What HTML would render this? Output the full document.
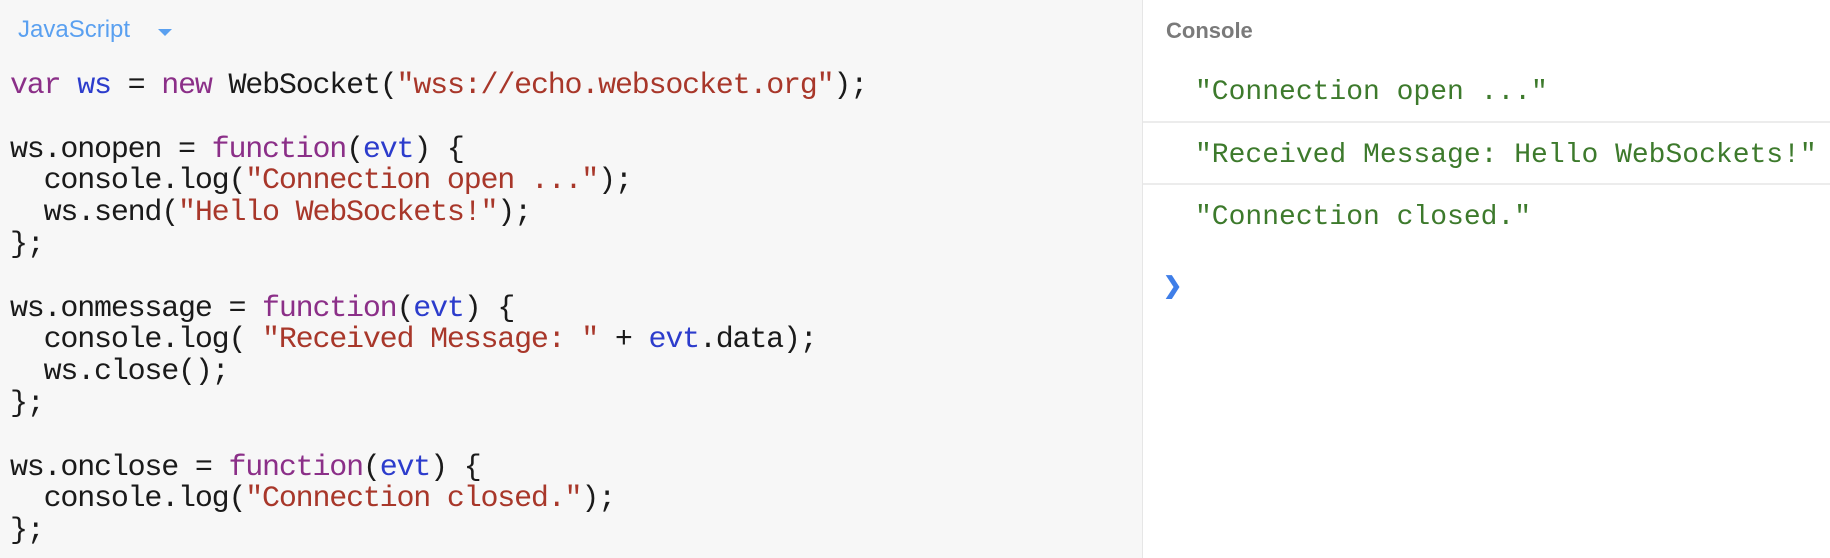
<!DOCTYPE html>
<html><head><meta charset="utf-8"><style>
html,body{margin:0;padding:0;}
body{width:1830px;height:558px;position:relative;overflow:hidden;background:#f7f7f7;font-family:"Liberation Sans",sans-serif;}
#left{position:absolute;left:0;top:0;width:1142px;height:558px;background:#f7f7f7;}
#right{position:absolute;left:1142px;top:0;width:688px;height:558px;background:#fff;border-left:1px solid #e6e6e6;}
.lang{position:absolute;left:18px;top:16px;font-size:24px;color:#5aa0f0;}
.tri{position:absolute;left:158px;top:29px;width:0;height:0;border-left:7px solid transparent;border-right:7px solid transparent;border-top:7px solid #5aa0f0;}
pre{position:absolute;left:10px;top:71px;margin:0;font-family:"Liberation Mono",monospace;font-size:30px;letter-spacing:-1.2px;line-height:31.8px;color:#1a1a1a;}
.k{color:#8b2f88}.v{color:#2c3ccc}.s{color:#a8372a}
.hdr{position:absolute;left:23px;top:18px;font-size:22px;font-weight:bold;color:#7a7a7a;}
.row{position:absolute;left:0;width:688px;height:62px;font-family:"Liberation Mono",monospace;font-size:28px;color:#3d7a2c;}
.row span{position:absolute;left:52px;top:17px;}
.sep{position:absolute;left:0;width:688px;height:2px;background:#ececec;}
.chev{position:absolute;left:20px;top:272px;font-size:23px;font-weight:bold;color:#3f7ee8;}
</style></head><body>
<div id="left">
<div class="lang">JavaScript</div><div class="tri"></div>
<pre><span class="k">var</span> <span class="v">ws</span> = <span class="k">new</span> WebSocket(<span class="s">"wss://echo.websocket.org"</span>);

ws.onopen = <span class="k">function</span>(<span class="v">evt</span>) {
  console.log(<span class="s">"Connection open ..."</span>);
  ws.send(<span class="s">"Hello WebSockets!"</span>);
};

ws.onmessage = <span class="k">function</span>(<span class="v">evt</span>) {
  console.log( <span class="s">"Received Message: "</span> + <span class="v">evt</span>.data);
  ws.close();
};

ws.onclose = <span class="k">function</span>(<span class="v">evt</span>) {
  console.log(<span class="s">"Connection closed."</span>);
};</pre>
</div>
<div id="right">
<div class="hdr">Console</div>
<div class="row" style="top:60px"><span>"Connection open ..."</span></div>
<div class="sep" style="top:121px"></div>
<div class="row" style="top:123px"><span>"Received Message: Hello WebSockets!"</span></div>
<div class="sep" style="top:183px"></div>
<div class="row" style="top:185px"><span>"Connection closed."</span></div>
<div class="chev">❯</div>
</div>
</body></html>
